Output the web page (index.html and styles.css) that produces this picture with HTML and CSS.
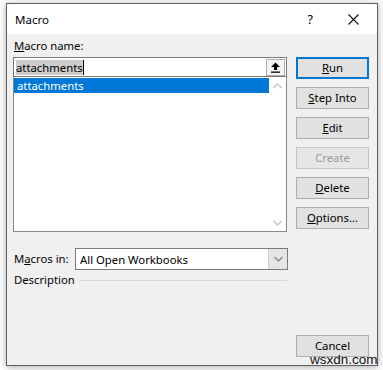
FILE: index.html
```html
<!DOCTYPE html>
<html>
<head>
<meta charset="utf-8">
<link rel="stylesheet" href="styles.css">
</head>
<body>
<div class="window">
  <div class="titlebar">
    <span class="title">Macro</span>
    <span class="help">?</span>
    <svg class="close" width="11" height="11" viewBox="0 0 11 11"><path d="M0.5 0.5 L10.5 10.5 M10.5 0.5 L0.5 10.5" stroke="#111" stroke-width="1.1" fill="none"/></svg>
  </div>
  <div class="body">
    <div class="top">
      <div class="leftcol">
        <div class="label"><u>M</u>acro name:</div>
        <div class="input">
          <span class="sel">attachments</span><span class="caret"></span>
          <span class="upbtn"><svg width="11" height="11" viewBox="0 0 11 11"><path d="M5.5 0.5 L10 5 L7 5 L7 8 L4 8 L4 5 L1 5 Z" fill="#000"/><rect x="1" y="9.5" width="9" height="1.3" fill="#000"/></svg></span>
        </div>
        <div class="listbox">
          <div class="items">
            <div class="item selected">attachments</div>
          </div>
          <div class="scrollbar">
            <svg width="9" height="6" viewBox="0 0 9 6"><path d="M0.5 5 L4.5 1 L8.5 5" stroke="#c2c2c2" stroke-width="1.3" fill="none"/></svg>
            <svg width="9" height="6" viewBox="0 0 9 6"><path d="M0.5 1 L4.5 5 L8.5 1" stroke="#c2c2c2" stroke-width="1.3" fill="none"/></svg>
          </div>
        </div>
      </div>
      <div class="buttons">
        <div class="btn focus"><u>R</u>un</div>
        <div class="btn"><u>S</u>tep Into</div>
        <div class="btn"><u>E</u>dit</div>
        <div class="btn disabled">Create</div>
        <div class="btn"><u>D</u>elete</div>
        <div class="btn"><u>O</u>ptions...</div>
      </div>
    </div>
    <div class="macrosin">
      <span class="label">M<u>a</u>cros in:</span>
      <div class="select">
        <span class="selval">All Open Workbooks</span>
        <span class="drop"><svg width="9" height="6" viewBox="0 0 9 6"><path d="M0.5 1 L4.5 5 L8.5 1" stroke="#7a7a7a" stroke-width="1.1" fill="none"/></svg></span>
      </div>
    </div>
    <div class="desc">
      <span class="label">Description</span>
      <span class="line"></span>
    </div>
    <div class="spacer"></div>
    <div class="footer">
      <div class="btn">Cancel</div>
    </div>
  </div>
</div>
<div class="watermark">wsxdn.com</div>
</body>
</html>
```
FILE: styles.css
```css
html, body {
  margin: 0;
  padding: 0;
  background: #ffffff;
}
body {
  width: 383px;
  height: 370px;
  overflow: hidden;
  position: relative;
  font-family: "Segoe UI", "Noto Sans", sans-serif;
  font-size: 11.3px;
  color: #000;
}
.window {
  margin: 3px 0 0 6px;
  width: 370px;
  height: 361px;
  border: 1px solid #5f5f5f;
  background: #f0f0f0;
  box-shadow: 0 1px 7px rgba(0,0,0,0.35);
  display: flex;
  flex-direction: column;
}
.titlebar {
  height: 30px;
  background: #ffffff;
  display: flex;
  align-items: center;
  padding-left: 8px;
  flex-shrink: 0;
}
.title {
  font-size: 11.5px;
  flex: 1;
}
.help {
  font-size: 12.5px;
  margin-right: 35px;
}
.close {
  margin-right: 18px;
}
.body {
  flex: 1;
  display: flex;
  flex-direction: column;
  padding: 4px 8px 8px 6px;
}
.top {
  display: flex;
  justify-content: space-between;
}
.leftcol {
  width: 274px;
  display: flex;
  flex-direction: column;
}
.label {
  line-height: 16px;
  height: 16px;
  padding-left: 1px;
}
.leftcol > .label {
  margin-bottom: 3px;
}
.input {
  height: 18px;
  border: 1px solid #7a7a7a;
  background: #fff;
  display: flex;
  align-items: center;
  padding-left: 2px;
  position: relative;
}
.sel {
  background: #cccccc;
  line-height: 15px;
}
.caret {
  width: 1px;
  height: 15px;
  background: #000;
}
.upbtn {
  margin-left: auto;
  margin-right: 1px;
  width: 17px;
  height: 15px;
  border: 1px solid #adadad;
  background: #f4f4f4;
  display: flex;
  align-items: center;
  justify-content: center;
}
.listbox {
  height: 154px;
  border: 1px solid #828790;
  border-top: none;
  background: #fff;
  display: flex;
}
.items {
  flex: 1;
  padding-top: 1px;
}
.item {
  height: 15px;
  line-height: 15px;
  padding-left: 3px;
}
.item.selected {
  background: #0078d7;
  color: #fff;
}
.scrollbar {
  width: 17px;
  background: #fff;
  display: flex;
  flex-direction: column;
  justify-content: space-between;
  align-items: center;
  padding: 6px 0 5px;
}
.buttons {
  width: 73px;
  padding-top: 19px;
  display: flex;
  flex-direction: column;
  gap: 8px;
}
.btn {
  height: 20px;
  border: 1px solid #adadad;
  background: #e1e1e1;
  display: flex;
  align-items: center;
  justify-content: center;
  line-height: 16px;
}
.btn.focus {
  border: 2px solid #0078d7;
  height: 18px;
}
.btn.disabled {
  color: #9b9b9b;
  border-color: #c4c4c4;
  background: #e6e6e6;
}
.macrosin {
  display: flex;
  align-items: center;
  margin-top: 16px;
}
.macrosin .label {
  width: 61px;
}
.select {
  width: 211px;
  height: 20px;
  border: 1px solid #7a7a7a;
  background: #fff;
  display: flex;
  align-items: center;
}
.selval {
  flex: 1;
  padding-left: 4px;
}
.drop {
  width: 18px;
  height: 20px;
  background: #e6e6e6;
  border-left: 1px solid #cfcfcf;
  display: flex;
  align-items: center;
  justify-content: center;
}
.desc {
  display: flex;
  align-items: center;
  margin-top: 2px;
}
.desc .line {
  flex: 1;
  height: 1px;
  background: #d9d9d9;
  margin-left: 4px;
  margin-right: 82px;
}
.spacer {
  flex: 1;
}
.footer {
  display: flex;
  justify-content: flex-end;
}
.footer .btn {
  width: 71px;
}
.watermark {
  position: absolute;
  left: 310px;
  top: 352px;
  font-family: "Liberation Sans", Arial, sans-serif;
  font-size: 13.5px;
  line-height: 16px;
  color: #111;
}
```
